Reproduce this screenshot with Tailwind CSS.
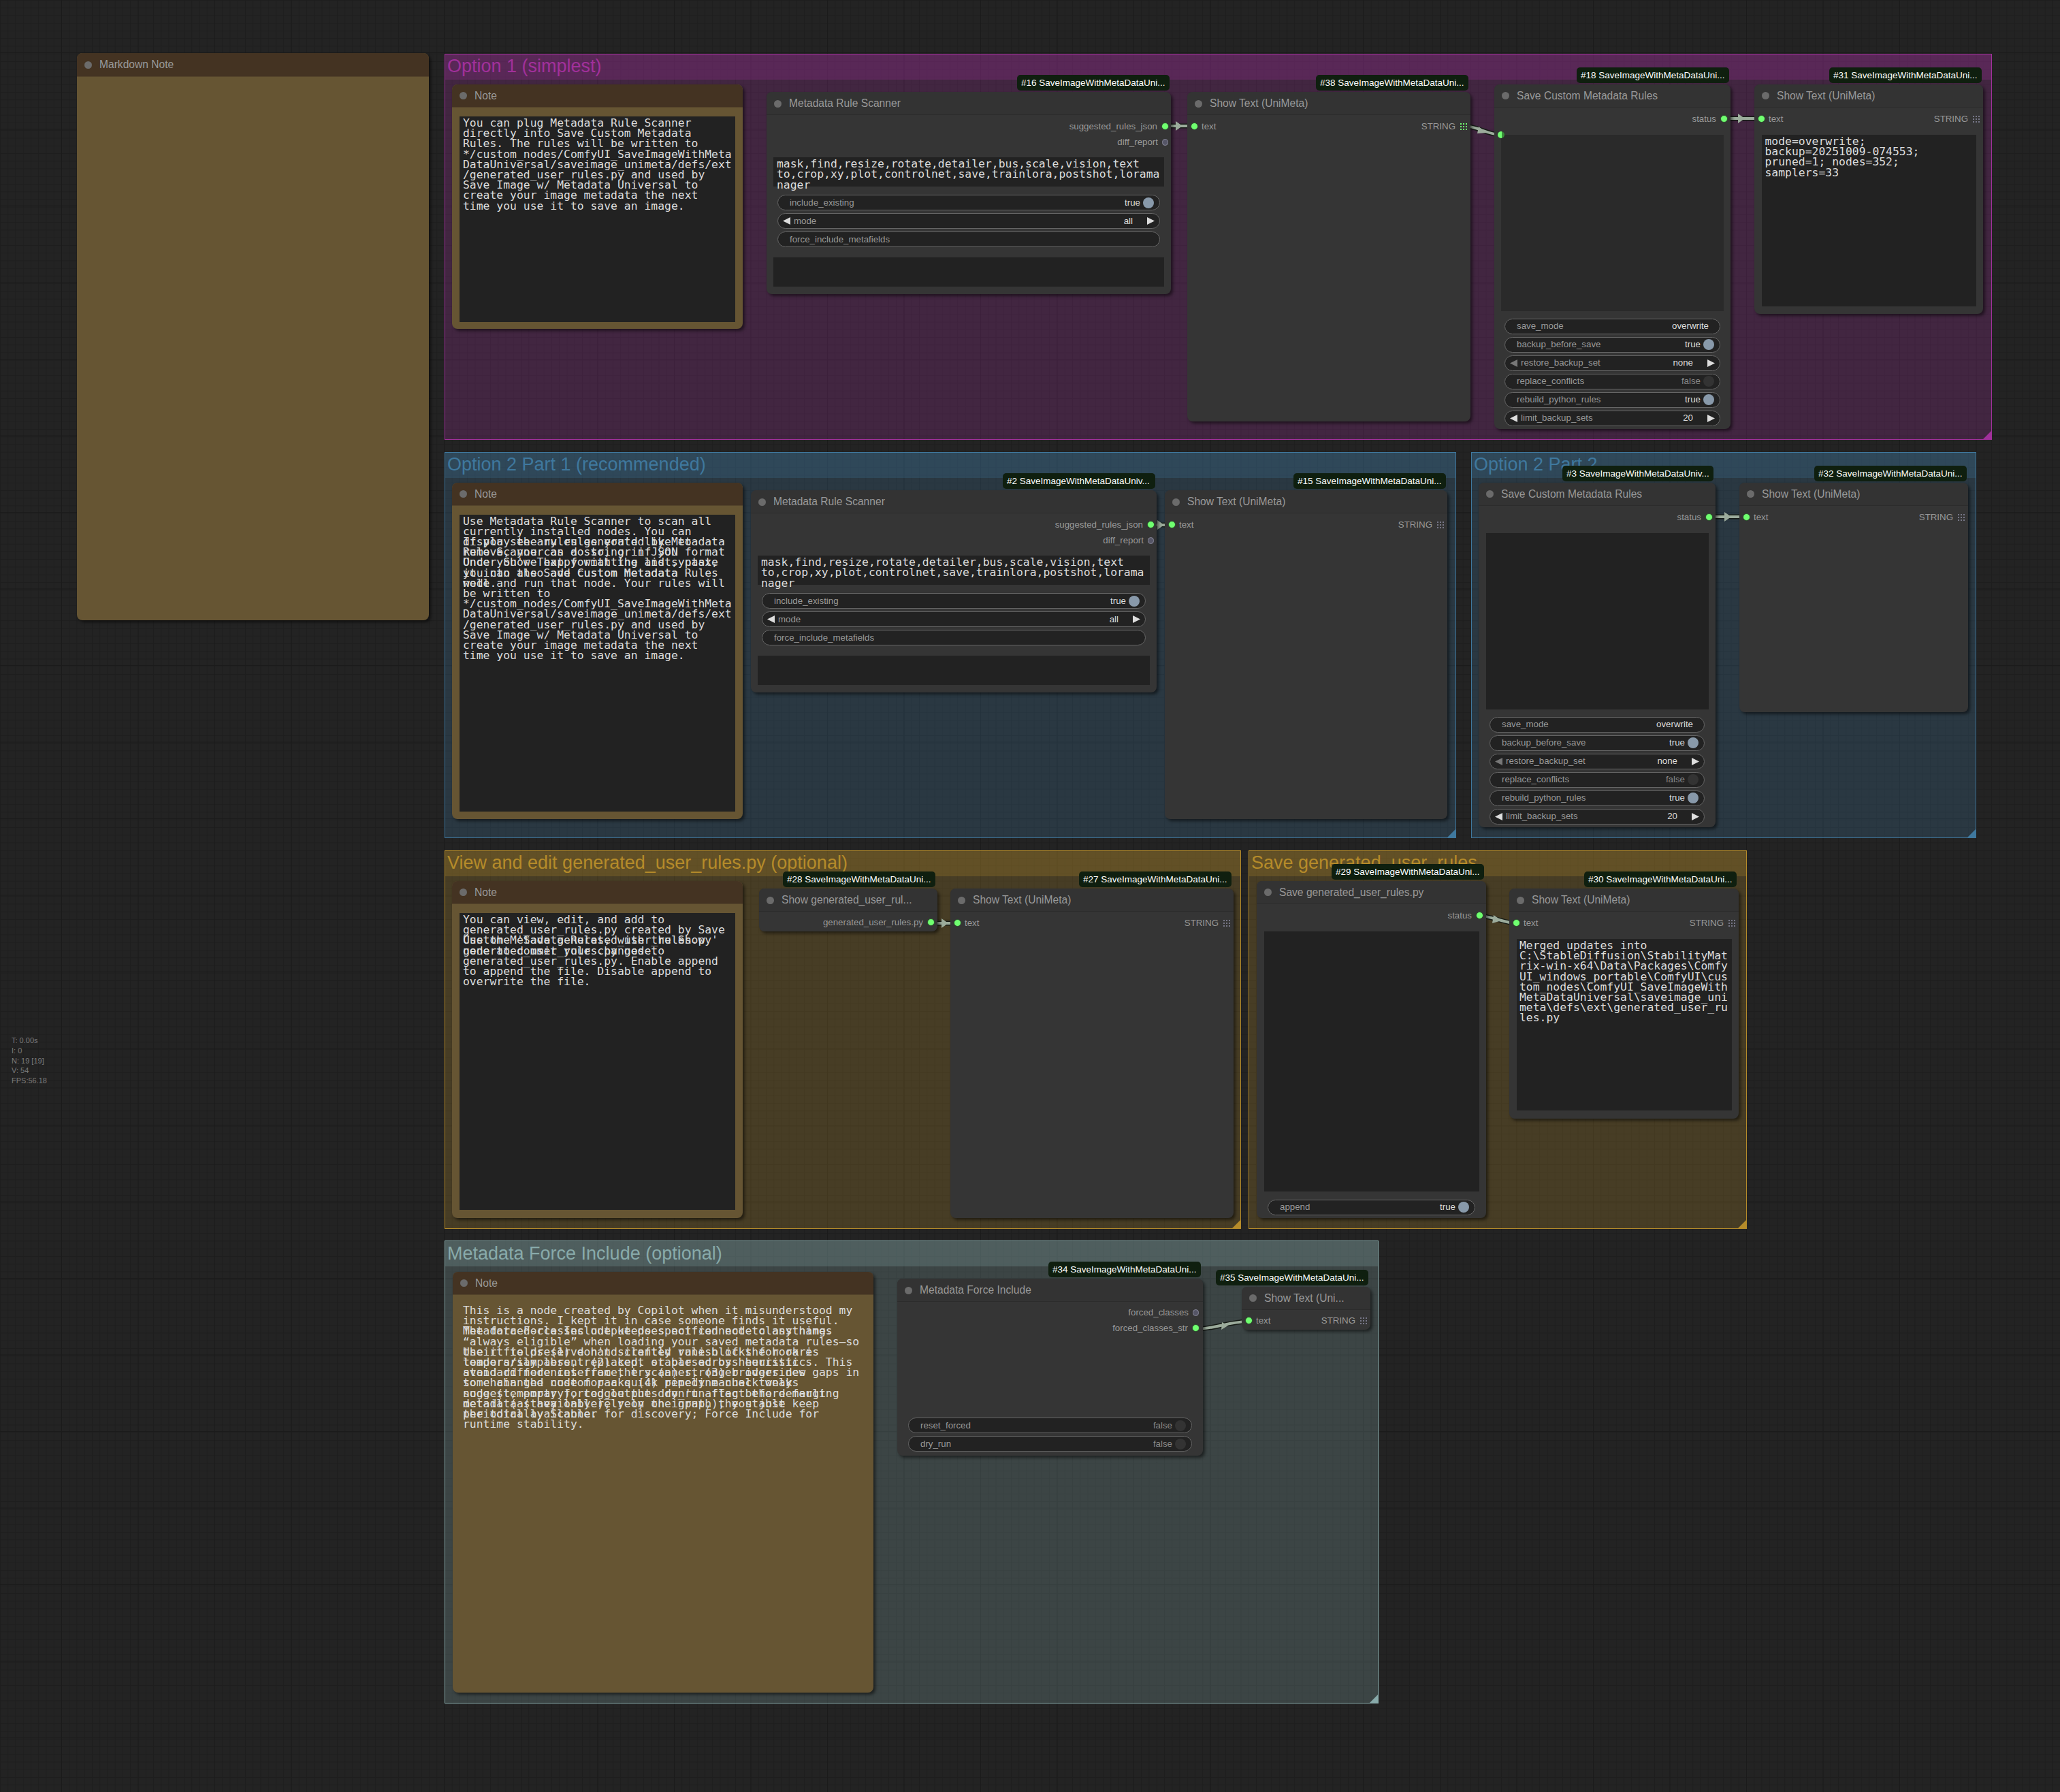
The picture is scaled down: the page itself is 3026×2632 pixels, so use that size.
<!DOCTYPE html>
<html lang="en">
<head>
<meta charset="utf-8">
<title>ComfyUI workflow</title>
<script src="https://cdn.jsdelivr.net/npm/@tailwindcss/browser@4"></script>
</head>
<body>
<div class="relative w-[3026px] h-[2632px] overflow-hidden bg-[#232323] font-['Liberation_Sans',sans-serif] bg-[linear-gradient(90deg,#1b1b1b_1px,transparent_1px),linear-gradient(#1b1b1b_1px,transparent_1px),linear-gradient(90deg,#1e1e1e_1px,transparent_1px),linear-gradient(#1e1e1e_1px,transparent_1px)] bg-[size:112.5px_112.5px,112.5px_112.5px,11.25px_11.25px,11.25px_11.25px] bg-[position:90px_77px,90px_77px,0_0,0_0]">

  <!-- stats -->
  <div class="absolute left-[17px] top-[1521px] text-[11px] leading-[14.8px] text-[#7c7c7c]">
    <div>T: 0.00s</div><div>I: 0</div><div>N: 19 [19]</div><div>V: 54</div><div>FPS:56.18</div>
  </div>

  <!-- groups -->
  <div class="absolute left-[653px] top-[79px] w-[2273px] h-[567px] border border-[#a1309b] bg-[#a1309b]/25">
    <div class="h-[37px] pl-[3px] bg-[#a1309b]/25 text-[27px] leading-[34px] text-[#a1309b] whitespace-nowrap">Option 1 (simplest)</div>
    <div class="absolute right-0 bottom-0 w-[12px] h-[12px] bg-[#a1309b] [clip-path:polygon(100%_0,100%_100%,0_100%)]"></div>
  </div>
  <div class="absolute left-[653px] top-[664px] w-[1486px] h-[567px] border border-[#3f789e] bg-[#3f789e]/25">
    <div class="h-[37px] pl-[3px] bg-[#3f789e]/25 text-[27px] leading-[34px] text-[#3f789e] whitespace-nowrap">Option 2 Part 1 (recommended)</div>
    <div class="absolute right-0 bottom-0 w-[12px] h-[12px] bg-[#3f789e] [clip-path:polygon(100%_0,100%_100%,0_100%)]"></div>
  </div>
  <div class="absolute left-[2161px] top-[664px] w-[742px] h-[567px] border border-[#3f789e] bg-[#3f789e]/25">
    <div class="h-[37px] pl-[3px] bg-[#3f789e]/25 text-[27px] leading-[34px] text-[#3f789e] whitespace-nowrap">Option 2 Part 2</div>
    <div class="absolute right-0 bottom-0 w-[12px] h-[12px] bg-[#3f789e] [clip-path:polygon(100%_0,100%_100%,0_100%)]"></div>
  </div>
  <div class="absolute left-[653px] top-[1249px] w-[1170px] h-[556px] border border-[#b58b2a] bg-[#b58b2a]/25">
    <div class="h-[37px] pl-[3px] bg-[#b58b2a]/25 text-[27px] leading-[34px] text-[#b58b2a] whitespace-nowrap">View and edit generated_user_rules.py (optional)</div>
    <div class="absolute right-0 bottom-0 w-[12px] h-[12px] bg-[#b58b2a] [clip-path:polygon(100%_0,100%_100%,0_100%)]"></div>
  </div>
  <div class="absolute left-[1834px] top-[1249px] w-[732px] h-[556px] border border-[#b58b2a] bg-[#b58b2a]/25">
    <div class="h-[37px] pl-[3px] bg-[#b58b2a]/25 text-[27px] leading-[34px] text-[#b58b2a] whitespace-nowrap">Save generated_user_rules</div>
    <div class="absolute right-0 bottom-0 w-[12px] h-[12px] bg-[#b58b2a] [clip-path:polygon(100%_0,100%_100%,0_100%)]"></div>
  </div>
  <div class="absolute left-[653px] top-[1822px] w-[1372px] h-[680px] border border-[#88aaaa] bg-[#88aaaa]/25">
    <div class="h-[37px] pl-[3px] bg-[#88aaaa]/25 text-[27px] leading-[36px] text-[#88aaaa] whitespace-nowrap">Metadata Force Include (optional)</div>
    <div class="absolute right-0 bottom-0 w-[12px] h-[12px] bg-[#88aaaa] [clip-path:polygon(100%_0,100%_100%,0_100%)]"></div>
  </div>

  <!-- links -->
  <svg class="absolute left-0 top-0 w-[3026px] h-[2632px]" viewBox="0 0 3026 2632" fill="none">
    <g stroke="#151a15" stroke-width="7">
      <path d="M1711 185H1754"/><path d="M2150 185C2170 185 2185 198 2205 198"/><path d="M2532 174H2587"/><path d="M1688 771H1721"/><path d="M2510 759H2565"/><path d="M1367 1356H1406"/><path d="M2172 1345C2190 1345 2210 1356 2228 1356"/><path d="M1756 1952C1785 1952 1805 1941 1834 1941"/>
    </g>
    <g stroke="#9cac9c" stroke-width="4">
      <path d="M1711 185H1754"/><path d="M2150 185C2170 185 2185 198 2205 198"/><path d="M2532 174H2587"/><path d="M1688 771H1721"/><path d="M2510 759H2565"/><path d="M1367 1356H1406"/><path d="M2172 1345C2190 1345 2210 1356 2228 1356"/><path d="M1756 1952C1785 1952 1805 1941 1834 1941"/>
    </g>
    <g fill="#9cac9c">
      <path d="M1727 178L1737 185L1727 192Z"/><path d="M2172 186L2184 195L2170 196Z"/><path d="M2553 167L2563 174L2553 181Z"/><path d="M1700 764L1710 771L1700 778Z"/><path d="M2533 752L2543 759L2533 766Z"/><path d="M1383 1349L1393 1356L1383 1363Z"/><path d="M2194 1344L2206 1352L2192 1356Z"/><path d="M1795 1942L1804 1947L1794 1953Z"/>
    </g>
  </svg>

  <!-- Markdown Note -->
  <div class="absolute left-[113px] top-[78px] w-[517px] h-[833px] rounded-[8px] bg-[#665533] shadow-[3px_3px_4px_rgba(0,0,0,0.5)]">
    <div class="flex items-center gap-[11px] h-[35px] pl-[11px] rounded-t-[8px] bg-[#443322] border-b border-[#54442a] text-[15.6px] text-[#999]"><span class="w-[11px] h-[11px] rounded-full bg-[#6b6b6b]"></span>Markdown Note</div>
  </div>

  <!-- Option 1: Note -->
  <div class="absolute left-[664px] top-[124px] w-[427px] h-[359px] rounded-[8px] bg-[#665533] shadow-[3px_3px_4px_rgba(0,0,0,0.5)]">
    <div class="flex items-center gap-[11px] h-[34px] pl-[11px] rounded-t-[8px] bg-[#443322] border-b border-[#54442a] text-[15.6px] text-[#999]"><span class="w-[11px] h-[11px] rounded-full bg-[#6b6b6b]"></span>Note</div>
    <div class="mx-[11px] mt-[13px] h-[302px] bg-[#222] pt-[2px] pl-[5px] font-['DejaVu_Sans_Mono',monospace] text-[16.4px] leading-[15.2px] text-[#ddd] whitespace-pre">You can plug Metadata Rule Scanner
directly into Save Custom Metadata
Rules. The rules will be written to
*/custom_nodes/ComfyUI_SaveImageWithMeta
DataUniversal/saveimage_unimeta/defs/ext
/generated_user_rules.py and used by
Save Image w/ Metadata Universal to
create your image metadata the next
time you use it to save an image.</div>
  </div>

  <!-- Option 1: Scanner -->
  <div class="absolute left-[1126px] top-[135px] w-[594px] h-[297px] rounded-[8px] bg-[#353535] shadow-[3px_3px_4px_rgba(0,0,0,0.5)]">
    <div class="absolute bottom-full mb-[2px] right-[2px] w-[224px] h-[23px] pl-[6px] rounded-[5px] bg-[#0f1f0f] text-[13.5px] leading-[23px] text-white whitespace-nowrap">#16 SaveImageWithMetaDataUni...</div>
    <div class="flex items-center gap-[11px] h-[34px] pl-[11px] pt-[1px] rounded-t-[8px] bg-[#333] border-b border-[#2c2c2c] text-[15.6px] text-[#999]"><span class="w-[11px] h-[11px] rounded-full bg-[#6b6b6b]"></span>Metadata Rule Scanner</div>
    <div class="pt-[5px] text-[13.3px] text-[#999]">
      <div class="flex items-center justify-end gap-[6px] h-[23.4px] pr-[3px]">suggested_rules_json<span class="w-[11px] h-[11px] rounded-full bg-[#70ff70] border border-[#2a4a2a]"></span></div>
      <div class="flex items-center justify-end gap-[6px] h-[23.4px] pr-[4px]">diff_report<span class="w-[9px] h-[10px] rounded-full bg-[#556] border border-[#889]"></span></div>
    </div>
    <div class="mx-[10px] mt-[10.5px] h-[43px] bg-[#222] pt-[2px] pl-[5px] font-['DejaVu_Sans_Mono',monospace] text-[16.4px] leading-[15.2px] text-[#ddd] whitespace-pre">mask,find,resize,rotate,detailer,bus,scale,vision,text
to,crop,xy,plot,controlnet,save,trainlora,postshot,lorama
nager</div>
    <div class="mx-[16px] mt-[12px] flex flex-col gap-[4px] text-[13.3px]">
      <div class="flex items-center h-[23px] rounded-full bg-[#222] border border-[#666] pl-[17px] pr-[8px]"><span class="flex-1 text-[#999]">include_existing</span><span class="text-[#ddd]">true</span><span class="ml-[4px] w-[16px] h-[16px] rounded-full bg-[#89a]"></span></div>
      <div class="flex items-center h-[23px] rounded-full bg-[#222] border border-[#666] pl-[7px] pr-[7px]"><svg class="w-[11px] h-[11px]" viewBox="0 0 11 11"><path d="M11 0V11L0 5.5Z" fill="#ddd"/></svg><span class="flex-1 ml-[5px] text-[#999]">mode</span><span class="text-[#ddd]">all</span><svg class="ml-[21px] w-[11px] h-[11px]" viewBox="0 0 11 11"><path d="M0 0V11L11 5.5Z" fill="#ddd"/></svg></div>
      <div class="flex items-center h-[23px] rounded-full bg-[#222] border border-[#666] pl-[17px] pr-[16px]"><span class="text-[#999]">force_include_metafields</span></div>
    </div>
    <div class="mx-[10px] mt-[15px] h-[43px] bg-[#222]"></div>
  </div>

  <!-- Option 1: Show Text 38 -->
  <div class="absolute left-[1744px] top-[135px] w-[416px] h-[484px] rounded-[8px] bg-[#353535] shadow-[3px_3px_4px_rgba(0,0,0,0.5)]">
    <div class="absolute bottom-full mb-[2px] right-[3px] w-[224px] h-[23px] pl-[6px] rounded-[5px] bg-[#0f1f0f] text-[13.5px] leading-[23px] text-white whitespace-nowrap">#38 SaveImageWithMetaDataUni...</div>
    <div class="flex items-center gap-[11px] h-[34px] pl-[11px] pt-[1px] rounded-t-[8px] bg-[#333] border-b border-[#2c2c2c] text-[15.6px] text-[#999]"><span class="w-[11px] h-[11px] rounded-full bg-[#6b6b6b]"></span>Show Text (UniMeta)</div>
    <div class="flex items-center gap-[5px] mt-[5px] h-[23.4px] pl-[5px] pr-[5px] text-[13.3px] text-[#999]"><span class="w-[11px] h-[11px] rounded-full bg-[#70ff70] border border-[#2a4a2a]"></span><span class="flex-1">text</span>STRING<svg class="ml-[2px] w-[10px] h-[10px]" viewBox="0 0 10 10"><path d="M0 0h2v2H0zM4 0h2v2H4zM8 0h2v2H8zM0 4h2v2H0zM4 4h2v2H4zM8 4h2v2H8zM0 8h2v2H0zM4 8h2v2H4zM8 8h2v2H8z" fill="#70ff70"/></svg></div>
  </div>

  <!-- Option 1: Save Custom 18 -->
  <div class="absolute left-[2195px] top-[124px] w-[347px] h-[506px] rounded-[8px] bg-[#353535] shadow-[3px_3px_4px_rgba(0,0,0,0.5)]">
    <div class="absolute bottom-full mb-[2.5px] right-[2px] w-[224px] h-[23px] pl-[6px] rounded-[5px] bg-[#0f1f0f] text-[13.5px] leading-[23px] text-white whitespace-nowrap">#18 SaveImageWithMetaDataUni...</div>
    <div class="flex items-center gap-[11px] h-[34px] pl-[11px] rounded-t-[8px] bg-[#333] border-b border-[#2c2c2c] text-[15.6px] text-[#999]"><span class="w-[11px] h-[11px] rounded-full bg-[#6b6b6b]"></span>Save Custom Metadata Rules</div>
    <div class="flex items-center justify-end gap-[6px] mt-[5px] h-[23.4px] pr-[4px] text-[13.3px] text-[#999]">status<span class="w-[11px] h-[11px] rounded-full bg-[#70ff70] border border-[#2a4a2a]"></span></div>
    <div class="relative mx-[10px] mt-[11.5px] h-[259px] bg-[#2a2a2a]">
      <span class="absolute -left-[5px] -top-[5px] w-[10px] h-[10px] rounded-full bg-[linear-gradient(90deg,#70ff70_55%,#3a8a3a_55%)]"></span>
    </div>
    <div class="mx-[15px] mt-[11px] flex flex-col gap-[4px] text-[13.3px]">
      <div class="flex items-center h-[23px] rounded-full bg-[#222] border border-[#666] pl-[17px] pr-[16px]"><span class="flex-1 text-[#999]">save_mode</span><span class="text-[#ddd]">overwrite</span></div>
      <div class="flex items-center h-[23px] rounded-full bg-[#222] border border-[#666] pl-[17px] pr-[8px]"><span class="flex-1 text-[#999]">backup_before_save</span><span class="text-[#ddd]">true</span><span class="ml-[4px] w-[16px] h-[16px] rounded-full bg-[#89a]"></span></div>
      <div class="flex items-center h-[23px] rounded-full bg-[#222] border border-[#666] pl-[7px] pr-[7px]"><svg class="w-[11px] h-[11px]" viewBox="0 0 11 11"><path d="M11 0V11L0 5.5Z" fill="#777"/></svg><span class="flex-1 ml-[5px] text-[#999]">restore_backup_set</span><span class="text-[#ddd]">none</span><svg class="ml-[21px] w-[11px] h-[11px]" viewBox="0 0 11 11"><path d="M0 0V11L11 5.5Z" fill="#ddd"/></svg></div>
      <div class="flex items-center h-[23px] rounded-full bg-[#222] border border-[#666] pl-[17px] pr-[8px]"><span class="flex-1 text-[#999]">replace_conflicts</span><span class="text-[#888]">false</span><span class="ml-[4px] w-[16px] h-[16px] rounded-full bg-[#333]"></span></div>
      <div class="flex items-center h-[23px] rounded-full bg-[#222] border border-[#666] pl-[17px] pr-[8px]"><span class="flex-1 text-[#999]">rebuild_python_rules</span><span class="text-[#ddd]">true</span><span class="ml-[4px] w-[16px] h-[16px] rounded-full bg-[#89a]"></span></div>
      <div class="flex items-center h-[23px] rounded-full bg-[#222] border border-[#666] pl-[7px] pr-[7px]"><svg class="w-[11px] h-[11px]" viewBox="0 0 11 11"><path d="M11 0V11L0 5.5Z" fill="#ddd"/></svg><span class="flex-1 ml-[5px] text-[#999]">limit_backup_sets</span><span class="text-[#ddd]">20</span><svg class="ml-[21px] w-[11px] h-[11px]" viewBox="0 0 11 11"><path d="M0 0V11L11 5.5Z" fill="#ddd"/></svg></div>
    </div>
  </div>

  <!-- Option 1: Show Text 31 -->
  <div class="absolute left-[2577px] top-[124px] w-[336px] h-[337px] rounded-[8px] bg-[#353535] shadow-[3px_3px_4px_rgba(0,0,0,0.5)]">
    <div class="absolute bottom-full mb-[2.5px] right-[2px] w-[224px] h-[23px] pl-[6px] rounded-[5px] bg-[#0f1f0f] text-[13.5px] leading-[23px] text-white whitespace-nowrap">#31 SaveImageWithMetaDataUni...</div>
    <div class="flex items-center gap-[11px] h-[34px] pl-[11px] rounded-t-[8px] bg-[#333] border-b border-[#2c2c2c] text-[15.6px] text-[#999]"><span class="w-[11px] h-[11px] rounded-full bg-[#6b6b6b]"></span>Show Text (UniMeta)</div>
    <div class="flex items-center gap-[5px] mt-[5px] h-[23.4px] pl-[5px] pr-[5px] text-[13.3px] text-[#999]"><span class="w-[11px] h-[11px] rounded-full bg-[#70ff70] border border-[#2a4a2a]"></span><span class="flex-1">text</span>STRING<svg class="ml-[2px] w-[10px] h-[10px]" viewBox="0 0 10 10"><path d="M0 0h2v2H0zM4 0h2v2H4zM8 0h2v2H8zM0 4h2v2H0zM4 4h2v2H4zM8 4h2v2H8zM0 8h2v2H0zM4 8h2v2H4zM8 8h2v2H8z" fill="#778"/></svg></div>
    <div class="mx-[10.5px] mt-[11.5px] h-[252px] bg-[#222] pt-[2px] pl-[5px] font-['DejaVu_Sans_Mono',monospace] text-[16.4px] leading-[15.2px] text-[#ddd] whitespace-pre">mode=overwrite;
backup=20251009-074553;
pruned=1; nodes=352;
samplers=33</div>
  </div>

  <!-- Option 2: Note -->
  <div class="absolute left-[664px] top-[709px] w-[427px] h-[494px] rounded-[8px] bg-[#665533] shadow-[3px_3px_4px_rgba(0,0,0,0.5)]">
    <div class="flex items-center gap-[11px] h-[34px] pl-[11px] rounded-t-[8px] bg-[#443322] border-b border-[#54442a] text-[15.6px] text-[#999]"><span class="w-[11px] h-[11px] rounded-full bg-[#6b6b6b]"></span>Note</div>
    <div class="relative mx-[11px] mt-[13px] h-[436px] bg-[#222] pt-[1.5px] pl-[5px] font-['DejaVu_Sans_Mono',monospace] text-[16.4px] leading-[15.2px] text-[#ddd] whitespace-pre">Use Metadata Rule Scanner to scan all
currently installed nodes. You can
display the rules generated by Metadata
Rule Scanner as a string in JSON format
Under Show Text formatting and syntax,
you can also add custom metadata
well.
<div class="absolute left-[5px] top-[31.9px]">If you see any rules you'd like to
remove, you can do so, or if you
Once you're happy with the list, paste
it into the Save Custom Metadata Rules
node and run that node. Your rules will
be written to
*/custom_nodes/ComfyUI_SaveImageWithMeta
DataUniversal/saveimage_unimeta/defs/ext
/generated_user_rules.py and used by
Save Image w/ Metadata Universal to
create your image metadata the next
time you use it to save an image.</div></div>
  </div>

  <!-- Option 2: Scanner -->
  <div class="absolute left-[1103px] top-[720px] w-[596px] h-[297px] rounded-[8px] bg-[#353535] shadow-[3px_3px_4px_rgba(0,0,0,0.5)]">
    <div class="absolute bottom-full mb-[2px] right-[2px] w-[224px] h-[23px] pl-[6px] rounded-[5px] bg-[#0f1f0f] text-[13.5px] leading-[23px] text-white whitespace-nowrap">#2 SaveImageWithMetaDataUniv...</div>
    <div class="flex items-center gap-[11px] h-[34px] pl-[11px] pt-[1px] rounded-t-[8px] bg-[#333] border-b border-[#2c2c2c] text-[15.6px] text-[#999]"><span class="w-[11px] h-[11px] rounded-full bg-[#6b6b6b]"></span>Metadata Rule Scanner</div>
    <div class="pt-[5px] text-[13.3px] text-[#999]">
      <div class="flex items-center justify-end gap-[6px] h-[23.4px] pr-[3px]">suggested_rules_json<span class="w-[11px] h-[11px] rounded-full bg-[#70ff70] border border-[#2a4a2a]"></span></div>
      <div class="flex items-center justify-end gap-[6px] h-[23.4px] pr-[4px]">diff_report<span class="w-[9px] h-[10px] rounded-full bg-[#556] border border-[#889]"></span></div>
    </div>
    <div class="mx-[10px] mt-[10.5px] h-[43px] bg-[#222] pt-[2px] pl-[5px] font-['DejaVu_Sans_Mono',monospace] text-[16.4px] leading-[15.2px] text-[#ddd] whitespace-pre">mask,find,resize,rotate,detailer,bus,scale,vision,text
to,crop,xy,plot,controlnet,save,trainlora,postshot,lorama
nager</div>
    <div class="mx-[16px] mt-[12px] flex flex-col gap-[4px] text-[13.3px]">
      <div class="flex items-center h-[23px] rounded-full bg-[#222] border border-[#666] pl-[17px] pr-[8px]"><span class="flex-1 text-[#999]">include_existing</span><span class="text-[#ddd]">true</span><span class="ml-[4px] w-[16px] h-[16px] rounded-full bg-[#89a]"></span></div>
      <div class="flex items-center h-[23px] rounded-full bg-[#222] border border-[#666] pl-[7px] pr-[7px]"><svg class="w-[11px] h-[11px]" viewBox="0 0 11 11"><path d="M11 0V11L0 5.5Z" fill="#ddd"/></svg><span class="flex-1 ml-[5px] text-[#999]">mode</span><span class="text-[#ddd]">all</span><svg class="ml-[21px] w-[11px] h-[11px]" viewBox="0 0 11 11"><path d="M0 0V11L11 5.5Z" fill="#ddd"/></svg></div>
      <div class="flex items-center h-[23px] rounded-full bg-[#222] border border-[#666] pl-[17px] pr-[16px]"><span class="text-[#999]">force_include_metafields</span></div>
    </div>
    <div class="mx-[10px] mt-[15px] h-[43px] bg-[#222]"></div>
  </div>

  <!-- Option 2: Show Text 15 -->
  <div class="absolute left-[1711px] top-[720px] w-[415px] h-[483px] rounded-[8px] bg-[#353535] shadow-[3px_3px_4px_rgba(0,0,0,0.5)]">
    <div class="absolute bottom-full mb-[2px] right-[2px] w-[224px] h-[23px] pl-[6px] rounded-[5px] bg-[#0f1f0f] text-[13.5px] leading-[23px] text-white whitespace-nowrap">#15 SaveImageWithMetaDataUni...</div>
    <div class="flex items-center gap-[11px] h-[34px] pl-[11px] pt-[1px] rounded-t-[8px] bg-[#333] border-b border-[#2c2c2c] text-[15.6px] text-[#999]"><span class="w-[11px] h-[11px] rounded-full bg-[#6b6b6b]"></span>Show Text (UniMeta)</div>
    <div class="flex items-center gap-[5px] mt-[5px] h-[23.4px] pl-[5px] pr-[5px] text-[13.3px] text-[#999]"><span class="w-[11px] h-[11px] rounded-full bg-[#70ff70] border border-[#2a4a2a]"></span><span class="flex-1">text</span>STRING<svg class="ml-[2px] w-[10px] h-[10px]" viewBox="0 0 10 10"><path d="M0 0h2v2H0zM4 0h2v2H4zM8 0h2v2H8zM0 4h2v2H0zM4 4h2v2H4zM8 4h2v2H8zM0 8h2v2H0zM4 8h2v2H4zM8 8h2v2H8z" fill="#778"/></svg></div>
  </div>

  <!-- Option 2 Part 2: Save Custom 3 -->
  <div class="absolute left-[2172px] top-[709px] w-[348px] h-[506px] rounded-[8px] bg-[#353535] shadow-[3px_3px_4px_rgba(0,0,0,0.5)]">
    <div class="absolute bottom-full mb-[2.5px] right-[3px] w-[222px] h-[23px] pl-[6px] rounded-[5px] bg-[#0f1f0f] text-[13.5px] leading-[23px] text-white whitespace-nowrap">#3 SaveImageWithMetaDataUniv...</div>
    <div class="flex items-center gap-[11px] h-[34px] pl-[11px] rounded-t-[8px] bg-[#333] border-b border-[#2c2c2c] text-[15.6px] text-[#999]"><span class="w-[11px] h-[11px] rounded-full bg-[#6b6b6b]"></span>Save Custom Metadata Rules</div>
    <div class="flex items-center justify-end gap-[6px] mt-[5px] h-[23.4px] pr-[4px] text-[13.3px] text-[#999]">status<span class="w-[11px] h-[11px] rounded-full bg-[#70ff70] border border-[#2a4a2a]"></span></div>
    <div class="mx-[10.5px] mt-[11.5px] h-[259px] bg-[#222]"></div>
    <div class="mx-[16px] mt-[11px] flex flex-col gap-[4px] text-[13.3px]">
      <div class="flex items-center h-[23px] rounded-full bg-[#222] border border-[#666] pl-[17px] pr-[16px]"><span class="flex-1 text-[#999]">save_mode</span><span class="text-[#ddd]">overwrite</span></div>
      <div class="flex items-center h-[23px] rounded-full bg-[#222] border border-[#666] pl-[17px] pr-[8px]"><span class="flex-1 text-[#999]">backup_before_save</span><span class="text-[#ddd]">true</span><span class="ml-[4px] w-[16px] h-[16px] rounded-full bg-[#89a]"></span></div>
      <div class="flex items-center h-[23px] rounded-full bg-[#222] border border-[#666] pl-[7px] pr-[7px]"><svg class="w-[11px] h-[11px]" viewBox="0 0 11 11"><path d="M11 0V11L0 5.5Z" fill="#777"/></svg><span class="flex-1 ml-[5px] text-[#999]">restore_backup_set</span><span class="text-[#ddd]">none</span><svg class="ml-[21px] w-[11px] h-[11px]" viewBox="0 0 11 11"><path d="M0 0V11L11 5.5Z" fill="#ddd"/></svg></div>
      <div class="flex items-center h-[23px] rounded-full bg-[#222] border border-[#666] pl-[17px] pr-[8px]"><span class="flex-1 text-[#999]">replace_conflicts</span><span class="text-[#888]">false</span><span class="ml-[4px] w-[16px] h-[16px] rounded-full bg-[#333]"></span></div>
      <div class="flex items-center h-[23px] rounded-full bg-[#222] border border-[#666] pl-[17px] pr-[8px]"><span class="flex-1 text-[#999]">rebuild_python_rules</span><span class="text-[#ddd]">true</span><span class="ml-[4px] w-[16px] h-[16px] rounded-full bg-[#89a]"></span></div>
      <div class="flex items-center h-[23px] rounded-full bg-[#222] border border-[#666] pl-[7px] pr-[7px]"><svg class="w-[11px] h-[11px]" viewBox="0 0 11 11"><path d="M11 0V11L0 5.5Z" fill="#ddd"/></svg><span class="flex-1 ml-[5px] text-[#999]">limit_backup_sets</span><span class="text-[#ddd]">20</span><svg class="ml-[21px] w-[11px] h-[11px]" viewBox="0 0 11 11"><path d="M0 0V11L11 5.5Z" fill="#ddd"/></svg></div>
    </div>
  </div>

  <!-- Option 2 Part 2: Show Text 32 -->
  <div class="absolute left-[2555px] top-[709px] w-[336px] h-[337px] rounded-[8px] bg-[#353535] shadow-[3px_3px_4px_rgba(0,0,0,0.5)]">
    <div class="absolute bottom-full mb-[2.5px] right-[2px] w-[224px] h-[23px] pl-[6px] rounded-[5px] bg-[#0f1f0f] text-[13.5px] leading-[23px] text-white whitespace-nowrap">#32 SaveImageWithMetaDataUni...</div>
    <div class="flex items-center gap-[11px] h-[34px] pl-[11px] rounded-t-[8px] bg-[#333] border-b border-[#2c2c2c] text-[15.6px] text-[#999]"><span class="w-[11px] h-[11px] rounded-full bg-[#6b6b6b]"></span>Show Text (UniMeta)</div>
    <div class="flex items-center gap-[5px] mt-[5px] h-[23.4px] pl-[5px] pr-[5px] text-[13.3px] text-[#999]"><span class="w-[11px] h-[11px] rounded-full bg-[#70ff70] border border-[#2a4a2a]"></span><span class="flex-1">text</span>STRING<svg class="ml-[2px] w-[10px] h-[10px]" viewBox="0 0 10 10"><path d="M0 0h2v2H0zM4 0h2v2H4zM8 0h2v2H8zM0 4h2v2H0zM4 4h2v2H4zM8 4h2v2H8zM0 8h2v2H0zM4 8h2v2H4zM8 8h2v2H8z" fill="#778"/></svg></div>
  </div>

  <!-- View and edit: Note -->
  <div class="absolute left-[664px] top-[1294px] w-[427px] h-[495px] rounded-[8px] bg-[#665533] shadow-[3px_3px_4px_rgba(0,0,0,0.5)]">
    <div class="flex items-center gap-[11px] h-[34px] pl-[11px] rounded-t-[8px] bg-[#443322] border-b border-[#54442a] text-[15.6px] text-[#999]"><span class="w-[11px] h-[11px] rounded-full bg-[#6b6b6b]"></span>Note</div>
    <div class="relative mx-[11px] mt-[13px] h-[436px] bg-[#222] pt-[2px] pl-[5px] font-['DejaVu_Sans_Mono',monospace] text-[16.4px] leading-[15.2px] text-[#ddd] whitespace-pre">You can view, edit, and add to
generated_user_rules.py created by Save
Custom Metadata Rules, with the Show
generated_user_rules.py node.
<div class="absolute left-[5px] top-[32.4px]">Use the 'Save generated_user_rules.py'
node to commit your changes to
generated_user_rules.py. Enable append
to append the file. Disable append to
overwrite the file.</div></div>
  </div>

  <!-- View and edit: Show generated -->
  <div class="absolute left-[1115px] top-[1305px] w-[262px] h-[63px] rounded-[8px] bg-[#353535] shadow-[3px_3px_4px_rgba(0,0,0,0.5)]">
    <div class="absolute bottom-full mb-[2px] right-[3px] w-[224px] h-[23px] pl-[6px] rounded-[5px] bg-[#0f1f0f] text-[13.5px] leading-[23px] text-white whitespace-nowrap">#28 SaveImageWithMetaDataUni...</div>
    <div class="flex items-center gap-[11px] h-[34px] pl-[11px] pt-[1px] rounded-t-[8px] bg-[#333] border-b border-[#2c2c2c] text-[15.6px] text-[#999] whitespace-nowrap"><span class="w-[11px] h-[11px] rounded-full bg-[#6b6b6b]"></span>Show generated_user_rul...</div>
    <div class="flex items-center justify-end gap-[6px] mt-[4px] h-[23.4px] pr-[4px] text-[13.3px] text-[#999]">generated_user_rules.py<span class="w-[11px] h-[11px] rounded-full bg-[#70ff70] border border-[#2a4a2a]"></span></div>
  </div>

  <!-- View and edit: Show Text 27 -->
  <div class="absolute left-[1396px] top-[1305px] w-[416px] h-[484px] rounded-[8px] bg-[#353535] shadow-[3px_3px_4px_rgba(0,0,0,0.5)]">
    <div class="absolute bottom-full mb-[2px] right-[3px] w-[224px] h-[23px] pl-[6px] rounded-[5px] bg-[#0f1f0f] text-[13.5px] leading-[23px] text-white whitespace-nowrap">#27 SaveImageWithMetaDataUni...</div>
    <div class="flex items-center gap-[11px] h-[34px] pl-[11px] pt-[1px] rounded-t-[8px] bg-[#333] border-b border-[#2c2c2c] text-[15.6px] text-[#999]"><span class="w-[11px] h-[11px] rounded-full bg-[#6b6b6b]"></span>Show Text (UniMeta)</div>
    <div class="flex items-center gap-[5px] mt-[5px] h-[23.4px] pl-[5px] pr-[5px] text-[13.3px] text-[#999]"><span class="w-[11px] h-[11px] rounded-full bg-[#70ff70] border border-[#2a4a2a]"></span><span class="flex-1">text</span>STRING<svg class="ml-[2px] w-[10px] h-[10px]" viewBox="0 0 10 10"><path d="M0 0h2v2H0zM4 0h2v2H4zM8 0h2v2H8zM0 4h2v2H0zM4 4h2v2H4zM8 4h2v2H8zM0 8h2v2H0zM4 8h2v2H4zM8 8h2v2H8z" fill="#778"/></svg></div>
  </div>

  <!-- Save generated: 29 -->
  <div class="absolute left-[1846px] top-[1294px] w-[337px] h-[495px] rounded-[8px] bg-[#353535] shadow-[3px_3px_4px_rgba(0,0,0,0.5)]">
    <div class="absolute bottom-full mb-[2.5px] right-[3px] w-[224px] h-[23px] pl-[6px] rounded-[5px] bg-[#0f1f0f] text-[13.5px] leading-[23px] text-white whitespace-nowrap">#29 SaveImageWithMetaDataUni...</div>
    <div class="flex items-center gap-[11px] h-[34px] pl-[11px] rounded-t-[8px] bg-[#333] border-b border-[#2c2c2c] text-[15.6px] text-[#999]"><span class="w-[11px] h-[11px] rounded-full bg-[#6b6b6b]"></span>Save generated_user_rules.py</div>
    <div class="flex items-center justify-end gap-[6px] mt-[5px] h-[23.4px] pr-[4px] text-[13.3px] text-[#999]">status<span class="w-[11px] h-[11px] rounded-full bg-[#70ff70] border border-[#2a4a2a]"></span></div>
    <div class="mx-[10.5px] mt-[11.5px] h-[382px] bg-[#222]"></div>
    <div class="mx-[16px] mt-[12px] flex flex-col gap-[4px] text-[13.3px]">
      <div class="flex items-center h-[23px] rounded-full bg-[#222] border border-[#666] pl-[17px] pr-[8px]"><span class="flex-1 text-[#999]">append</span><span class="text-[#ddd]">true</span><span class="ml-[4px] w-[16px] h-[16px] rounded-full bg-[#89a]"></span></div>
    </div>
  </div>

  <!-- Save generated: 30 -->
  <div class="absolute left-[2217px] top-[1305px] w-[337px] h-[338px] rounded-[8px] bg-[#353535] shadow-[3px_3px_4px_rgba(0,0,0,0.5)]">
    <div class="absolute bottom-full mb-[2px] right-[3px] w-[224px] h-[23px] pl-[6px] rounded-[5px] bg-[#0f1f0f] text-[13.5px] leading-[23px] text-white whitespace-nowrap">#30 SaveImageWithMetaDataUni...</div>
    <div class="flex items-center gap-[11px] h-[34px] pl-[11px] pt-[1px] rounded-t-[8px] bg-[#333] border-b border-[#2c2c2c] text-[15.6px] text-[#999]"><span class="w-[11px] h-[11px] rounded-full bg-[#6b6b6b]"></span>Show Text (UniMeta)</div>
    <div class="flex items-center gap-[5px] mt-[5px] h-[23.4px] pl-[5px] pr-[5px] text-[13.3px] text-[#999]"><span class="w-[11px] h-[11px] rounded-full bg-[#70ff70] border border-[#2a4a2a]"></span><span class="flex-1">text</span>STRING<svg class="ml-[2px] w-[10px] h-[10px]" viewBox="0 0 10 10"><path d="M0 0h2v2H0zM4 0h2v2H4zM8 0h2v2H8zM0 4h2v2H0zM4 4h2v2H4zM8 4h2v2H8zM0 8h2v2H0zM4 8h2v2H4zM8 8h2v2H8z" fill="#778"/></svg></div>
    <div class="mx-[10.5px] mt-[11.5px] h-[252px] bg-[#222] pt-[2px] pl-[4.5px] font-['DejaVu_Sans_Mono',monospace] text-[16.4px] leading-[15.2px] text-[#ddd] whitespace-pre">Merged updates into
C:\StableDiffusion\StabilityMat
rix-win-x64\Data\Packages\Comfy
UI_windows_portable\ComfyUI\cus
tom_nodes\ComfyUI_SaveImageWith
MetaDataUniversal\saveimage_uni
meta\defs\ext\generated_user_ru
les.py</div>
  </div>

  <!-- Force include: Note -->
  <div class="absolute left-[665px] top-[1868px] w-[618px] h-[618px] rounded-[8px] bg-[#665533] shadow-[3px_3px_4px_rgba(0,0,0,0.5)]">
    <div class="flex items-center gap-[11px] h-[34px] pl-[11px] rounded-t-[8px] bg-[#443322] border-b border-[#54442a] text-[15.6px] text-[#999]"><span class="w-[11px] h-[11px] rounded-full bg-[#6b6b6b]"></span>Note</div>
    <div class="relative mt-[15px] pl-[15px] font-['DejaVu_Sans_Mono',monospace] text-[16.4px] leading-[15.2px] text-[#ddd] whitespace-pre">This is a node created by Copilot when it misunderstood my
instructions. I kept it in case someone finds it useful.
Metadata Force Include keeps specified node class names
“always eligible” when loading your saved metadata rules—so
their fields (1) don't silently vanish if the hook is
temporarily absent (2) kept stable across heuristics. This
avoid differences from the scanner, (3) bridges new gaps in
some changed custom packs (4) remedy manual tweaks
suggest, empty forced_outputs don't affect the default
metadata (they only rely on the graph), you just keep
periodically Scanner for discovery; Force Include for
runtime stability.
<div class="absolute left-[15px] top-[30.4px]">The forced-classes output does not connect to anything.

Use it to preserve hand-crafted rule blocks for rare
loaders/samplers, replaced, or parsed by heuristic
standard node interface, try (a) stronger overrides
to chain the node for a quick pipeline check only
node (temporary), toggle the dry_run flag before merging
detail (as available), rely on input, the stable
the total available.</div></div>
  </div>

  <!-- Force include: 34 -->
  <div class="absolute left-[1318px] top-[1878px] w-[449px] h-[260px] rounded-[8px] bg-[#353535] shadow-[3px_3px_4px_rgba(0,0,0,0.5)]">
    <div class="absolute bottom-full mb-[2px] right-[3px] w-[224px] h-[23px] pl-[6px] rounded-[5px] bg-[#0f1f0f] text-[13.5px] leading-[23px] text-white whitespace-nowrap">#34 SaveImageWithMetaDataUni...</div>
    <div class="flex items-center gap-[11px] h-[34px] pl-[11px] pt-[1px] rounded-t-[8px] bg-[#333] border-b border-[#2c2c2c] text-[15.6px] text-[#999]"><span class="w-[11px] h-[11px] rounded-full bg-[#6b6b6b]"></span>Metadata Force Include</div>
    <div class="pt-[5px] text-[13.3px] text-[#999]">
      <div class="flex items-center justify-end gap-[6px] h-[22.5px] pr-[6px]">forced_classes<span class="w-[9px] h-[10px] rounded-full bg-[#556] border border-[#889]"></span></div>
      <div class="flex items-center justify-end gap-[6px] h-[22.5px] pr-[5px]">forced_classes_str<span class="w-[11px] h-[11px] rounded-full bg-[#70ff70] border border-[#2a4a2a]"></span></div>
    </div>
    <div class="mx-[16px] mt-[120px] flex flex-col gap-[4px] text-[13.3px]">
      <div class="flex items-center h-[23px] rounded-full bg-[#222] border border-[#666] pl-[17px] pr-[8px]"><span class="flex-1 text-[#999]">reset_forced</span><span class="text-[#888]">false</span><span class="ml-[4px] w-[16px] h-[16px] rounded-full bg-[#333]"></span></div>
      <div class="flex items-center h-[23px] rounded-full bg-[#222] border border-[#666] pl-[17px] pr-[8px]"><span class="flex-1 text-[#999]">dry_run</span><span class="text-[#888]">false</span><span class="ml-[4px] w-[16px] h-[16px] rounded-full bg-[#333]"></span></div>
    </div>
  </div>

  <!-- Force include: 35 -->
  <div class="absolute left-[1824px] top-[1890px] w-[189px] h-[63px] rounded-[8px] bg-[#353535] shadow-[3px_3px_4px_rgba(0,0,0,0.5)]">
    <div class="absolute bottom-full mb-[2px] right-[3px] w-[224px] h-[23px] pl-[6px] rounded-[5px] bg-[#0f1f0f] text-[13.5px] leading-[23px] text-white whitespace-nowrap">#35 SaveImageWithMetaDataUni...</div>
    <div class="flex items-center gap-[11px] h-[34px] pl-[11px] rounded-t-[8px] bg-[#333] border-b border-[#2c2c2c] text-[15.6px] text-[#999] whitespace-nowrap"><span class="w-[11px] h-[11px] rounded-full bg-[#6b6b6b]"></span>Show Text (Uni...</div>
    <div class="flex items-center gap-[5px] mt-[4px] h-[23.4px] pl-[5px] pr-[5px] text-[13.3px] text-[#999]"><span class="w-[11px] h-[11px] rounded-full bg-[#70ff70] border border-[#2a4a2a]"></span><span class="flex-1">text</span>STRING<svg class="ml-[2px] w-[10px] h-[10px]" viewBox="0 0 10 10"><path d="M0 0h2v2H0zM4 0h2v2H4zM8 0h2v2H8zM0 4h2v2H0zM4 4h2v2H4zM8 4h2v2H8zM0 8h2v2H0zM4 8h2v2H4zM8 8h2v2H8z" fill="#778"/></svg></div>
  </div>

</div>
</body>
</html>
